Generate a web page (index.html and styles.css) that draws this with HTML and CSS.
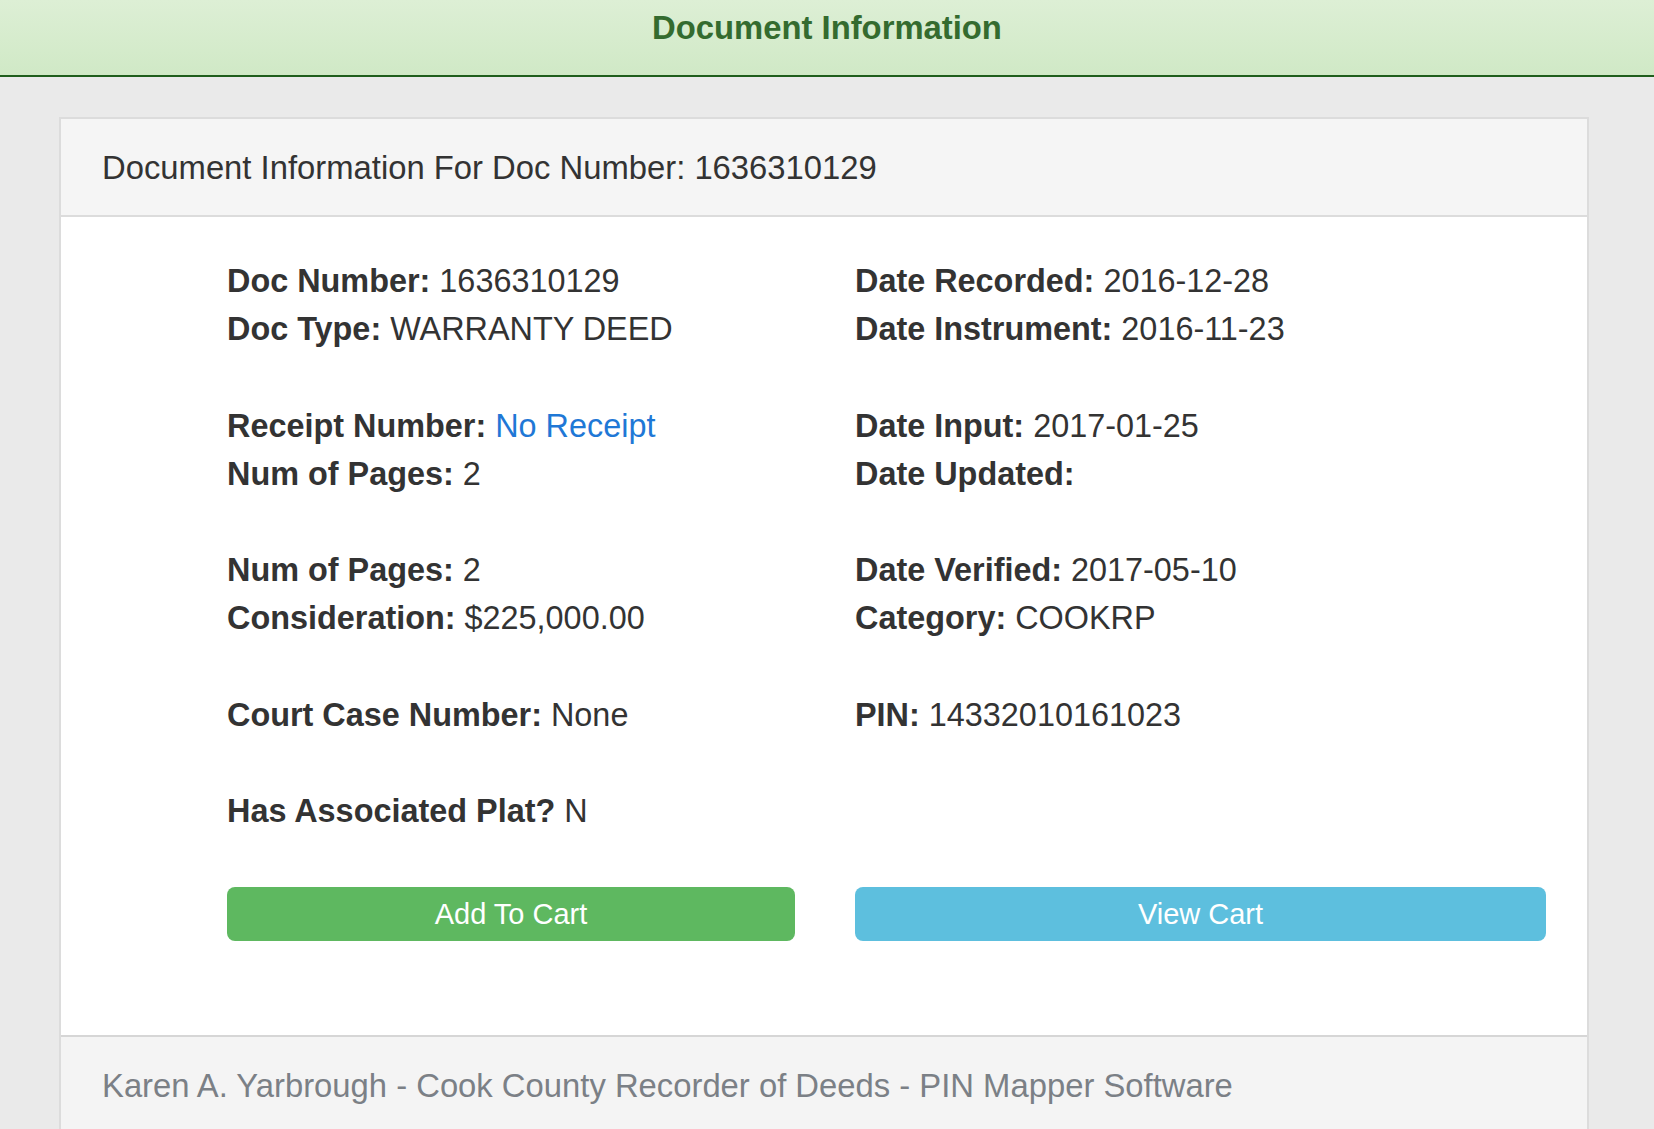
FILE: index.html
```html
<!DOCTYPE html>
<html lang="en">
<head>
<meta charset="utf-8">
<title>Document Information</title>
<link rel="stylesheet" href="styles.css">
</head>
<body>
<header class="top-bar">
  <h1 class="top-title">Document Information</h1>
</header>
<main class="panel">
  <div class="panel-heading">Document Information For Doc Number: 1636310129</div>
  <div class="panel-body">
    <div class="info-grid">
      <div class="group">
        <div class="row"><b>Doc Number:</b> 1636310129</div>
        <div class="row"><b>Doc Type:</b> WARRANTY DEED</div>
      </div>
      <div class="group">
        <div class="row"><b>Date Recorded:</b> 2016-12-28</div>
        <div class="row"><b>Date Instrument:</b> 2016-11-23</div>
      </div>
      <div class="group">
        <div class="row"><b>Receipt Number:</b> <a class="link" href="#">No Receipt</a></div>
        <div class="row"><b>Num of Pages:</b> 2</div>
      </div>
      <div class="group">
        <div class="row"><b>Date Input:</b> 2017-01-25</div>
        <div class="row"><b>Date Updated:</b></div>
      </div>
      <div class="group">
        <div class="row"><b>Num of Pages:</b> 2</div>
        <div class="row"><b>Consideration:</b> $225,000.00</div>
      </div>
      <div class="group">
        <div class="row"><b>Date Verified:</b> 2017-05-10</div>
        <div class="row"><b>Category:</b> COOKRP</div>
      </div>
      <div class="group">
        <div class="row"><b>Court Case Number:</b> None</div>
      </div>
      <div class="group">
        <div class="row"><b>PIN:</b> 14332010161023</div>
      </div>
      <div class="group">
        <div class="row"><b>Has Associated Plat?</b> N</div>
      </div>
      <div class="group"></div>
      <button class="btn btn-green" type="button">Add To Cart</button>
      <button class="btn btn-blue" type="button">View Cart</button>
    </div>
  </div>
  <div class="panel-footer">Karen A. Yarbrough - Cook County Recorder of Deeds - PIN Mapper Software</div>
</main>
</body>
</html>
```

FILE: styles.css
```css
html, body {
  margin: 0;
  padding: 0;
}

body {
  background: #eaeaea;
  font-family: "Liberation Sans", Arial, Helvetica, sans-serif;
  font-size: 32.4px;
  color: #333;
  height: 1129px;
  overflow: hidden;
}

.top-bar {
  height: 75px;
  background: linear-gradient(to bottom, #ddefd5, #d0e9c6);
  border-bottom: 2px solid #1f5e1c;
  box-sizing: content-box;
}

.top-title {
  margin: 0;
  padding-top: 8px;
  text-align: center;
  font-size: 32.8px;
  line-height: 40px;
  font-weight: bold;
  color: #346b2f;
}

.panel {
  margin: 40px 65px 0 59px;
  border: 2px solid #dcdcdc;
  border-bottom: none;
  background: #fff;
}

.panel-heading {
  background: #f5f5f5;
  border-bottom: 2px solid #dcdcdc;
  padding: 25px 41px 23px;
  font-size: 32.8px;
  line-height: 48px;
  color: #333;
}

.panel-body {
  padding: 40px 41px 94px 166px;
}

.info-grid {
  display: grid;
  grid-template-columns: 568px 1fr;
  column-gap: 60px;
  row-gap: 48.2px;
  line-height: 48.2px;
}

.row b {
  font-weight: bold;
}

.link {
  color: #1f78d6;
  text-decoration: none;
}

.btn {
  height: 54px;
  margin-top: 3px;
  border: none;
  border-radius: 8px;
  color: #fff;
  font-family: inherit;
  font-size: 29px;
  line-height: 54px;
  padding: 0;
  cursor: pointer;
}

.btn-green {
  background: #5eb860;
}

.btn-blue {
  background: #5dbfde;
}

.panel-footer {
  background: #f4f4f4;
  border-top: 2px solid #d6d6d6;
  padding: 25px 41px 40px;
  font-size: 32.8px;
  line-height: 48px;
  color: #7b8086;
}
```
